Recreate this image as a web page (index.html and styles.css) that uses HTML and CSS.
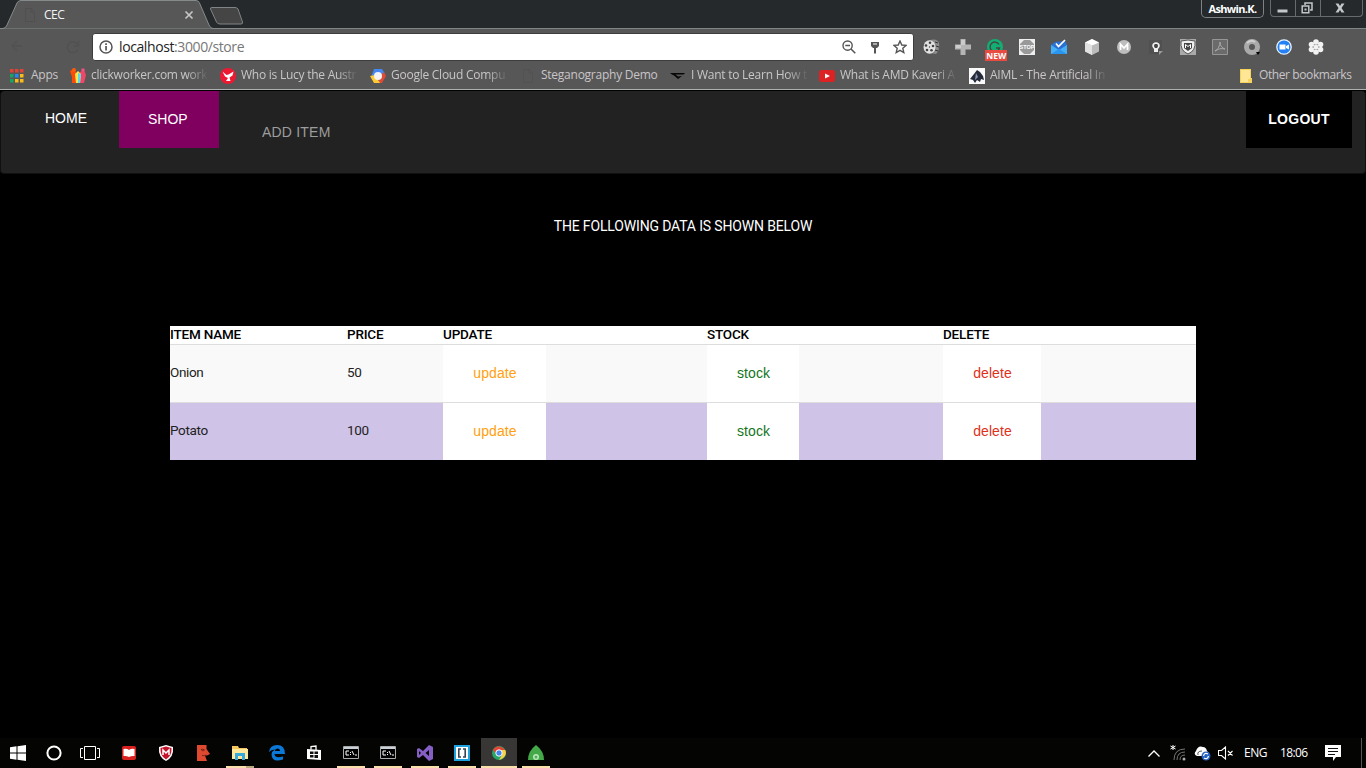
FILE: index.html
```html
<!DOCTYPE html>
<html lang="en">
<head>
<meta charset="utf-8">
<title>CEC</title>
<link rel="stylesheet" href="styles.css">
</head>
<body>
<header class="chrome">
  <div class="tabstrip">
    <div class="tab">
      <svg class="tab-shape" width="245" height="29" viewBox="0 0 245 29"><path d="M0 29V28.500H3Q6 28 7 25L17 3Q18 .5 21 .5H196Q198.500 .5 199.500 3L209 25Q210.500 28.500 213 28.500H245V29Z" fill="#575757" stroke="#858b8b"/><path d="M212 7.500H235Q237 7.500 238 9L242.500 22Q243 24 241 24H220Q217.500 24 216.500 22L210.500 9Q210 7.500 212 7.500Z" fill="#454545" stroke="#808484"/></svg>
      <svg class="tab-doc" width="12" height="14" viewBox="0 0 12 14"><path d="M1.500 .5h6l3 3v10h-9zM7 .5v3.500h3.500" fill="none" stroke="#505050"/></svg>
      <span class="tab-title">CEC</span>
      <svg class="tab-close" width="10" height="10" viewBox="0 0 10 10"><path d="M1.500 1.500l7 7M8.500 1.500l-7 7" stroke="#c6c6c6" stroke-width="1.700"/></svg>
    </div>
    <div class="user">Ashwin.K.</div>
    <div class="window-controls">
      <span><svg width="11" height="12" viewBox="0 0 11 12"><path d="M.5 7.500h10v3H.5z" fill="#c4c6c7"/></svg></span>
      <span><svg width="12" height="12" viewBox="0 0 12 12"><path d="M4 3V1h7v7H9M1.200 4h6.600v6.800H1.200z" fill="none" stroke="#c4c6c7" stroke-width="1.500"/><path d="M3.500 6.500h2v2h-2z" fill="#c4c6c7"/></svg></span>
      <span><svg width="10" height="10" viewBox="0 0 10 10"><path d="M.5.5h3L5 3 6.500.5h3L6.500 5l3 4.500h-3L5 7 3.500 9.500h-3l3-4.500z" fill="#c4c6c7"/></svg></span>
    </div>
  </div>

  <div class="toolbar">
    <div class="nav-icons">
      <svg width="12" height="12" viewBox="0 0 12 12"><path d="M11 6H1m5-5L1 6l5 5" fill="none" stroke="#525252" stroke-width="1.500"/></svg>
      <svg width="14" height="14" viewBox="0 0 14 14"><path d="M12 5A5.500 5.500 0 1 0 12 9.500M12.500 1v5h-5" fill="none" stroke="#525252" stroke-width="1.600"/></svg>
    </div>
    <div class="address">
      <svg width="14" height="14" viewBox="0 0 14 14"><circle cx="7" cy="7" r="6" fill="none" stroke="#555" stroke-width="1.500"/><path d="M6.200 6h1.700v4.500H6.200zM6.200 3.300h1.700V5H6.200z" fill="#555"/></svg>
      <span class="url">localhost<i>:3000/store</i></span>
      <svg class="lens" width="14" height="14" viewBox="0 0 14 14"><circle cx="5.600" cy="5.600" r="4.600" fill="none" stroke="#555" stroke-width="1.400"/><path d="M9 9l4.300 4.300M3.300 5.600H8" stroke="#555" stroke-width="1.500"/></svg>
      <svg class="key" width="10" height="13" viewBox="0 0 10 13"><path d="M1 1h8v4L7 7H6v5.500H4V7H3L1 5z" fill="#555"/><path d="M3 3h4" stroke="#fff"/></svg>
      <svg width="14" height="14" viewBox="0 0 14 14"><path d="M7 1l1.800 4 4.200.4-3.200 2.900 1 4.200L7 10.300l-3.800 2.200 1-4.200L1 5.400 5.200 5z" fill="none" stroke="#555" stroke-width="1.400"/></svg>
    </div>
    <div class="extensions">
      <span><svg width="18" height="18" viewBox="0 0 18 18"><path d="M8 2q7-2 9 3 1 7-3 11l-6-1z" fill="#8c8c8c"/><path d="M13 4l3 1M14 8l3 1M13 12l3 1" stroke="#333"/><ellipse cx="7.500" cy="9" rx="6" ry="6.800" fill="#e2e2e2"/><g fill="#444"><circle cx="8" cy="4.700" r="1.300"/><circle cx="4" cy="7.500" r="1.300"/><circle cx="5" cy="12" r="1.300"/><circle cx="9.500" cy="12.300" r="1.300"/><circle cx="11" cy="8" r="1.300"/><circle cx="7.500" cy="9" r=".7"/></g></svg></span>
      <span><svg width="16" height="16" viewBox="0 0 16 16"><path d="M5.500 0h5v5.500H16v5h-5.500V16h-5v-5.500H0v-5h5.500z" fill="#b5b5b5"/><path d="M6 1h4v5H6zM1 6h5v3H1z" fill="#ccc"/></svg></span>
      <span class="new-ext"><svg width="16" height="16" viewBox="0 0 16 16"><circle cx="8" cy="8" r="8" fill="#12ae72"/><path d="M12 5.500A4.800 4.800 0 1 0 12.500 9H9" fill="none" stroke="#454545" stroke-width="1.400"/></svg><b>NEW</b></span>
      <span><svg width="16" height="16" viewBox="0 0 16 16"><path d="M0 0h16v16H0z" fill="#eee"/><path d="M5 1h6l4 4v6l-4 4H5l-4-4V5z" fill="#999"/><text x="8" y="10.200" text-anchor="middle" class="stop">STOP</text></svg></span>
      <span><svg width="16" height="16" viewBox="0 0 16 16"><path d="M0 6l4-3 10-1 2 4v9H0z" fill="#2675d8"/><path d="M3 4l9-1 2 5-6 4-5-4z" fill="#2b6fd0"/><path d="M0 6l8 5 8-5v9H0z" fill="#45b0fa"/><path d="M0 15l8-5 8 5z" fill="#2b95ee"/><path d="M5 4.500l2.500 3L14 1" fill="none" stroke="#fff" stroke-width="1.700"/></svg></span>
      <span><svg width="16" height="16" viewBox="0 0 16 16"><path d="M8 0l7 3.500v9L8 16l-7-3.500v-9z" fill="#bbb"/><path d="M8 0l7 3.500-7 3-7-3z" fill="#fff"/><path d="M1 3.500l7 3V16l-7-3.500z" fill="#e1e1e1"/></svg></span>
      <span><svg width="16" height="16" viewBox="0 0 16 16"><circle cx="8" cy="8" r="7" fill="#bdbdbd"/><path d="M4.500 11V5.200L8 9l3.500-3.800V11" fill="none" stroke="#fff" stroke-width="1.800"/></svg></span>
      <span><svg width="16" height="16" viewBox="0 0 16 16"><path d="M1 1h13v14H1z" fill="#505050"/><path d="M6 10q-3-3-1-5.500 3-2.700 6 0 2 2.500-1 5.500v3H6z" fill="#eee"/><path d="M7 9Q5 6.500 7 5h2q2 1.500 0 4z" fill="#444"/><path d="M11 12h4l-4 4z" fill="#999"/></svg></span>
      <span><svg width="16" height="16" viewBox="0 0 16 16"><path d="M0 0h16v16H0z" fill="#aaa"/><path d="M1 2l7-1 7 1q1 10-7 13Q0 12 1 2z" fill="#eee" stroke="#555"/><path d="M4 4h8v5l-4 3-4-3z" fill="#444"/><path d="M5.500 9V5.500l2.500 2 2.500-2V9" fill="none" stroke="#fff"/></svg></span>
      <span><svg width="16" height="16" viewBox="0 0 16 16"><path d="M.5.5h15v15H.5z" fill="#6b6b6b" stroke="#969696"/><path d="M3 12c3-1 5-6 5-9 0 4 2 6 5 7-4-1-7 0-10 2z" fill="none" stroke="#aaa"/></svg></span>
      <span><svg width="16" height="16" viewBox="0 0 16 16"><circle cx="8" cy="8" r="5.500" fill="none" stroke="#aaa" stroke-width="5"/><path d="M3 4q4-4 8-1" fill="none" stroke="#d0d0d0" stroke-width="2"/><path d="M12 13h4l-2 3z" fill="#000"/></svg></span>
      <span><svg width="16" height="16" viewBox="0 0 16 16"><circle cx="8" cy="8" r="7.200" fill="#2381f5" stroke="#e8f2ff" stroke-width="1.300"/><path d="M3.500 5.500h6v5h-6zM10 7l3-1.500v5L10 9z" fill="#fff"/></svg></span>
      <span><svg width="16" height="16" viewBox="0 0 16 16"><g fill="#f2f2f2"><circle cx="8" cy="3" r="2.800"/><circle cx="3.500" cy="5.500" r="2.800"/><circle cx="12.500" cy="5.500" r="2.800"/><circle cx="3.500" cy="10.500" r="2.800"/><circle cx="12.500" cy="10.500" r="2.800"/><circle cx="8" cy="13" r="2.800"/><circle cx="8" cy="8" r="2.500"/></g><g fill="#aaa"><circle cx="6.500" cy="5.500" r=".8"/><circle cx="9.500" cy="5.500" r=".8"/><circle cx="5" cy="8" r=".8"/><circle cx="11" cy="8" r=".8"/><circle cx="6.500" cy="10.500" r=".8"/><circle cx="9.500" cy="10.500" r=".8"/></g></svg></span>
    </div>
  </div>

  <div class="bookmarks">
    <div class="mark apps"><svg width="14" height="14" viewBox="0 0 14 14"><path fill="#e34335" d="M0 0h3.500v3.500H0zM5 0h3.500v3.500H5zM10 0h3.500v3.500H10z"/><path fill="#16a562" d="M0 5h3.500v3.500H0zM0 10h3.500v3.500H0z"/><path fill="#2389f5" d="M5 5h3.500v3.500H5z"/><path fill="#fbbc17" d="M10 5h3.500v3.500H10zM5 10h3.500v3.500H5zM10 10h3.500v3.500H10z"/></svg><span>Apps</span></div>
    <div class="mark m1"><svg width="16" height="16" viewBox="0 0 16 16"><path d="M0 3l3-2 3 3v11H2V9z" fill="#fb4b09"/><circle cx="4" cy="2" r="2" fill="#ff5a0a"/><path d="M10 4l4-2 2 5-2 8h-4z" fill="#ef466b"/><circle cx="13" cy="2" r="1.800" fill="#f05080"/><path d="M5 6l3-3 3 3-1 9H6z" fill="#ffe44c"/><path d="M8 5l3 1-1 9H8z" fill="#54d9ed"/></svg><span class="fade">clickworker.com work</span></div>
    <div class="mark m2"><svg width="16" height="16" viewBox="0 0 16 16"><circle cx="8" cy="8" r="8" fill="#ed1932"/><path d="M2.500 3.500l4 3.500 2-.5 5-3-1 4-3 2 1 3.500H6l2-3-3-1.500z" fill="#fff"/></svg><span class="fade">Who is Lucy the Austr</span></div>
    <div class="mark m3"><svg width="16" height="16" viewBox="0 0 16 16"><path d="M4 1h8l2.500 4-5 2-8 1z" fill="#4688f1"/><path d="M14 4l2 4-4 7H8l3-8z" fill="#df4b37"/><path d="M0 8l4 7h6l-5-8z" fill="#ffcb35"/><circle cx="8" cy="8" r="4" fill="#f4f4f4"/></svg><span class="fade">Google Cloud Compu</span></div>
    <div class="mark m4"><svg width="16" height="14" viewBox="0 0 16 14"><path d="M3.500.5h6l3 3v10h-9zM9 .5V4h3.500" fill="none" stroke="#525252"/></svg><span>Steganography Demo</span></div>
    <div class="mark m5"><svg width="16" height="16" viewBox="0 0 16 16"><path d="M0 5h15l-1.500 1.500H5.500l2.500 2 4-.5-4 3-4-3.500-2-1z" fill="#070707"/></svg><span class="fade">I Want to Learn How t</span></div>
    <div class="mark m6"><svg width="16" height="12" viewBox="0 0 16 12"><rect width="16" height="12" rx="2.500" fill="#dc2222"/><path d="M6 3.500l5 2.500-5 2.500z" fill="#fff"/></svg><span class="fade">What is AMD Kaveri A</span></div>
    <div class="mark m7"><svg width="16" height="16" viewBox="0 0 16 16"><path d="M0 0h16v16H0z" fill="#fafafa"/><path d="M1 11l4-5 3-4 3 2 3 4 1 4-3-1-1 3-3-2-2 3-2-3z" fill="#252b3a"/><path d="M7 5l2 4-3 3z" fill="#9099ad"/></svg><span class="fade">AIML - The Artificial In</span></div>
    <div class="mark other"><svg width="12" height="14" viewBox="0 0 12 14"><path d="M0 0h11v9h1v5H0z" fill="#f5d35c"/><path d="M1 1h9v9H8v3H1z" fill="#ffe795"/></svg><span>Other bookmarks</span></div>
  </div>
</header>

<main class="page">
  <nav class="navbar">
    <a class="home">HOME</a><a class="shop">SHOP</a><a class="add">ADD ITEM</a><a class="logout">LOGOUT</a>
  </nav>
  <h1 class="heading">THE FOLLOWING DATA IS SHOWN BELOW</h1>
  <table class="items">
    <colgroup><col class="c-name"><col class="c-price"><col class="c-update"><col class="c-stock"><col class="c-delete"></colgroup>
    <thead><tr><th>ITEM NAME</th><th>PRICE</th><th>UPDATE</th><th>STOCK</th><th>DELETE</th></tr></thead>
    <tbody>
      <tr><td>Onion</td><td>50</td><td><a class="btn update">update</a></td><td><a class="btn stock">stock</a></td><td><a class="btn delete">delete</a></td></tr>
      <tr><td>Potato</td><td>100</td><td><a class="btn update">update</a></td><td><a class="btn stock">stock</a></td><td><a class="btn delete">delete</a></td></tr>
    </tbody>
  </table>
</main>

<footer class="taskbar">
  <div class="start">
    <span><svg width="16" height="16" viewBox="0 0 16 16"><path d="M0 2.200L6.500 1.300V7.500H0zM7.500 1.200L16 0v7.500H7.500zM0 8.500h6.500v6.200L0 13.800zM7.500 8.500H16V16l-8.500-1.200z" fill="#fff"/></svg></span>
    <span><svg width="16" height="16" viewBox="0 0 16 16"><circle cx="8" cy="8" r="6.600" fill="none" stroke="#fff" stroke-width="2"/></svg></span>
    <span><svg width="20" height="14" viewBox="0 0 20 14"><path d="M4.500.5h11v13h-11zM3 2.500H.5v9H3M17 2.500h2.500v9H17" fill="none" stroke="#fff"/></svg></span>
  </div>
  <div class="tasks">
    <span><svg width="14" height="14" viewBox="0 0 14 14"><rect width="14" height="14" rx="2" fill="#d92220"/><path d="M1.500 3q3-1 5.500 1 2.500-2 5.500-1v7q-3-.5-5.500 1-2.500-1.500-5.500-1z" fill="#fff"/></svg></span>
    <span><svg width="16" height="16" viewBox="0 0 16 16"><path d="M1 2l7-2 7 2q1 10-7 14Q0 12 1 2z" fill="#fff"/><path d="M2.500 3L8 1.500 13.500 3Q14 11 8 14.500 2 11 2.500 3z" fill="#c5152c"/><path d="M5 10V5l3 3 3-3v5" fill="none" stroke="#fff" stroke-width="1.500"/></svg></span>
    <span><svg width="14" height="16" viewBox="0 0 14 16"><path d="M1 0h9.500v4L14 9l-3 1.500H9L11 16H1z" fill="#df4930"/><path d="M5 4.500q2-1 3.500.5L7 6zM6 10.500q3 .5 4.500-.5" fill="none" stroke="#612018" stroke-width=".8"/></svg></span>
    <span class="run folder"><svg width="18" height="16" viewBox="0 0 18 16"><path d="M1 1h6l1 2h8v11H1z" fill="#f6c75d"/><path d="M1 4h16v10H1z" fill="#ffe79b"/><path d="M4 8h10v7h-3v-4H7v4H4z" fill="#36a9dd"/></svg></span>
    <span><svg width="16" height="16" viewBox="0 0 16 16"><path d="M0 7Q1 0 8 0q8 0 8 9H5.500Q6 14 14 11.500v3Q3 18 2.500 9.500 3 6 6 4.500 2 4.500 0 7zM5.800 6h5.200Q11 3.500 8.500 3.500T5.800 6z" fill="#0b78d7" fill-rule="evenodd"/></svg></span>
    <span><svg width="16" height="16" viewBox="0 0 16 16"><path d="M1 4l14 1v10L1 14z" fill="#fff"/><path d="M5 4.500V1.500L10 1v4" fill="none" stroke="#fff" stroke-width="1.300"/><path d="M4 6.500h3.500V9H4zM8.500 6.500H12V9H8.500zM4 10h3.500v2.500H4zM8.500 10H12v3H8.500z" fill="#111"/></svg></span>
    <span class="run"><svg width="16" height="14" viewBox="0 0 16 14"><path d="M.5.5h15v12H.5z" fill="#000" stroke="#aaa"/><path d="M1 2h14" stroke="#c9d1d8" stroke-width="2"/><path d="M6 5H3v4h3M7.500 6v1M7.500 8v1M9 5l2 4M12 9h2" fill="none" stroke="#fff"/></svg></span>
    <span class="run"><svg width="16" height="14" viewBox="0 0 16 14"><path d="M.5.5h15v12H.5z" fill="#000" stroke="#aaa"/><path d="M1 2h14" stroke="#c9d1d8" stroke-width="2"/><path d="M6 5H3v4h3M7.500 6v1M7.500 8v1M9 5l2 4M12 9h2" fill="none" stroke="#fff"/></svg></span>
    <span class="run"><svg width="16" height="16" viewBox="0 0 16 16"><path d="M12 0l4 2v12l-4 2-6-6-4 3-2-1V4l2-1 4 3zM12 5L8.500 8l3.500 3zM2 6v4l2-2z" fill="#865fc5" fill-rule="evenodd"/></svg></span>
    <span class="run"><svg width="16" height="16" viewBox="0 0 16 16"><path d="M0 0h16v16H0z" fill="#1ca3df"/><path d="M2 2h12v12H2z" fill="#fff"/><path d="M7 4H4.800v8H7M9 4h2.200v8H9" fill="none" stroke="#344554" stroke-width="1.600"/></svg></span>
    <span class="run active"><svg width="14" height="14" viewBox="0 0 14 14"><circle cx="7" cy="7" r="7" fill="#27a768"/><path d="M1 3.500Q7-3 13.200 4H7L4 8z" fill="#e24435"/><path d="M7 4h6.300Q16 11 7 14l3-5z" fill="#fbd247"/><circle cx="7" cy="7" r="3.200" fill="#4385ed" stroke="#fff" stroke-width="1"/></svg></span>
    <span class="run"><svg width="16" height="16" viewBox="0 0 16 16"><path d="M8 0q8 6 8 15H0Q0 6 8 0z" fill="#44a948"/><circle cx="8" cy="12" r="3" fill="#b9e9b8"/><circle cx="8" cy="12" r="1.500" fill="#5aac5c"/></svg></span>
  </div>
  <div class="tray">
    <svg class="chev" width="12" height="7" viewBox="0 0 12 7"><path d="M.5 6.500L6 1l5.500 5.500" fill="none" stroke="#fff" stroke-width="1.300"/></svg>
    <svg class="wifi" width="16" height="16" viewBox="0 0 16 16"><g fill="none" stroke="#767676"><path d="M4 15Q4 4 15 4M7 15q0-8 8-8M10 15q0-5 5-5"/></g><circle cx="14" cy="14" r="1.500" fill="#aaa"/><path d="M3 0v5M.5 1l5 3M5.500 1l-5 3" stroke="#fff"/></svg>
    <svg class="cloud" width="17" height="16" viewBox="0 0 17 16"><path d="M3 11q-4-2-1-5Q4 0 9 2q3 0 4 4 3 2 2 5z" fill="#fff"/><path d="M4 10q-1-4 4-4" fill="none" stroke="#111" stroke-width=".7"/><circle cx="12" cy="11" r="4.500" fill="#2463c4"/><path d="M9.500 11q1-4 4.500-2M14.500 11q-1 4-4.500 2" fill="none" stroke="#fff" stroke-width="1.200"/></svg>
    <svg class="vol" width="16" height="14" viewBox="0 0 16 14"><path d="M.5 4.500h3l4-3.500v12l-4-3.500h-3zM10 5l4.500 4.500M14.500 5L10 9.500" fill="none" stroke="#fff" stroke-width="1.100"/></svg>
    <span class="lang">ENG</span><span class="clock">18:06</span>
    <svg class="note" width="16" height="16" viewBox="0 0 16 16"><path d="M0 0h16v12h-5l-3 4v-4H0z" fill="#fff"/><path d="M3 3.500h10M3 6.500h10M3 9.500h7" stroke="#111"/></svg>
  </div>
</footer>
</body>
</html>
```

FILE: styles.css
```css
* { box-sizing: border-box; }
body { margin: 0; width: 1366px; height: 768px; overflow: hidden; background: #000; display: flex; flex-direction: column; font-family: "Liberation Sans", Arial, sans-serif; }
svg { display: block; flex: none; }

.chrome { height: 90px; background: #575757; border-bottom: 1px solid #aeb1b1; font-family: "Open Sans", "Noto Sans", sans-serif; flex: none; }
.tabstrip { height: 29px; background: #25292c; border-bottom: 1px solid #7d8585; display: flex; }
.tab { position: relative; width: 245px; height: 29px; display: flex; padding-left: 24px; }
.tab-shape { position: absolute; left: 0; top: 0; }
.tab-doc { position: relative; margin-top: 8px; }
.tab-title { position: relative; margin-left: 8px; width: 140px; font-size: 12px; line-height: 29px; letter-spacing: -.5px; color: #f4f4f4; }
.tab-close { position: relative; margin-top: 10px; }
.user { margin-left: auto; width: 63px; height: 18px; border: 1px solid #7e8284; border-top: 0; border-radius: 0 0 5px 5px; color: #fff; font-size: 11px; font-weight: 700; line-height: 17px; letter-spacing: -.65px; text-align: center; }
.window-controls { display: flex; margin: 0 3px 0 6px; width: 93px; height: 17px; border: 1px solid #666b6e; border-top: 0; border-radius: 0 0 4px 4px; }
.window-controls span { width: 25px; padding-right: 2px; display: flex; align-items: center; justify-content: center; border-right: 1px solid #666b6e; }
.window-controls span:last-child { flex: 1; border: 0; padding-right: 4px; }

.toolbar { height: 36px; display: flex; align-items: center; }
.nav-icons { width: 92px; display: flex; padding-left: 11px; gap: 43px; }
.address { width: 822px; height: 28px; background: #fff; border: 1px solid #3d3d3d; border-radius: 3px; display: flex; align-items: center; padding-left: 6px; }
.url { margin-left: 6px; width: 723px; font-size: 14px; line-height: 24px; letter-spacing: -.4px; color: #222; }
.url i { font-style: normal; color: #777; }
.key { margin: 0 13px 0 14px; }
.extensions { display: flex; margin-left: 1px; }
.extensions span { width: 32.100px; height: 28px; display: flex; align-items: center; justify-content: center; }
.new-ext { position: relative; }
.new-ext b { position: absolute; left: 6px; top: 17px; width: 22px; height: 11px; background: #ea4b40; color: #fff; font-size: 8.500px; line-height: 11px; text-align: center; }
.stop { font: bold 5.500px "Liberation Sans", sans-serif; fill: #fff; }

.bookmarks { height: 21px; display: flex; align-items: center; padding-left: 10px; font-size: 12px; letter-spacing: -.25px; color: #c9c5c8; line-height: 20px; white-space: nowrap; }
.mark { display: flex; align-items: center; gap: 5px; width: 150px; flex: none; }
.mark span { width: 120px; padding-bottom: 1px; }
.fade { mask-image: linear-gradient(90deg, #000 80%, transparent 98%); }
.apps { width: 60px; gap: 7px; }
.apps span { width: 30px; }
.m5 { width: 149px; }
.other { margin-left: 121px; width: 116px; gap: 7px; }
.other span { width: 97px; letter-spacing: -.4px; }

.page { flex: 1; min-height: 0; background: #000; }
.navbar { height: 83px; margin: 1px 0 0; background: #222; border: 1px solid #101010; border-top: 0; border-radius: 4px; display: flex; align-items: flex-start; font-size: 14px; line-height: 20px; color: #fff; }
.home { width: 118px; padding: 17px 0 0 44px; }
.shop { width: 100px; height: 57px; background: #80005f; padding: 18px 0 0 29px; }
.add { margin-left: 43px; padding-top: 31px; color: #9d9d9d; letter-spacing: .2px; }
.logout { margin: 0 13px 0 auto; width: 106px; height: 57px; background: #000; padding-top: 18px; text-align: center; font-weight: 700; letter-spacing: .3px; }
.heading { margin: 42px 0 90px; text-align: center; font-family: Roboto, sans-serif; font-size: 14px; line-height: 20px; font-weight: 400; color: #fff; letter-spacing: -.15px; }
.items { width: 1026px; margin: 0 auto; table-layout: fixed; border-collapse: separate; border-spacing: 0; font-family: Roboto, sans-serif; font-size: 13.500px; letter-spacing: -.35px; color: #222; background: #fff; }
.c-name { width: 177px; }
.c-price { width: 96px; }
.c-update { width: 264px; }
.c-stock { width: 236px; }
.c-delete { width: 253px; }
.items th { padding: 0 0 2px; height: 19px; line-height: 16px; font-weight: 500; letter-spacing: -.2px; text-align: left; color: #000; border-bottom: 1px solid #ddd; }
.items td { padding: 0 0 3px; height: 57px; }
.items td:nth-child(n+3) { padding: 0; }
.items tbody tr:first-child td { height: 58px; background: #f9f9f9; border-bottom: 1px solid #ddd; }
.items tbody tr:last-child td { background: #d0c3e8; }
.btn { display: block; height: 57px; line-height: 57px; background: #fff; font-family: "Liberation Sans", Arial, sans-serif; font-size: 14px; text-align: center; letter-spacing: .1px; padding-left: 1px; }
.update { width: 103px; color: #ffa010; }
.stock { width: 92px; color: #137522; }
.delete { width: 98px; color: #df3018; }

.taskbar { height: 30px; flex: none; background: #040403; display: flex; color: #fff; font-family: "Open Sans", sans-serif; font-size: 12px; }
.start, .tasks { display: flex; }
.start span { width: 36px; display: flex; align-items: center; justify-content: center; }
.tasks { margin-left: 3px; }
.tasks span { width: 36px; margin-right: 1px; display: flex; align-items: center; justify-content: center; position: relative; }
.run::after { content: ""; position: absolute; left: 4px; right: 4px; bottom: 0; height: 2px; background: #f9dfaa; }
.active { background: #383735; }
.active::after { left: 0; right: 0; }
.folder::after { background: linear-gradient(90deg, #f9dfaa 70%, #b9a77e 70%); }
.tray { margin-left: auto; display: flex; align-items: center; width: 218px; }
.wifi { margin-left: 10px; }
.cloud { margin-left: 8px; }
.vol { margin-left: 7px; }
.lang { margin-left: 10px; width: 36px; padding-bottom: 1px; letter-spacing: -.45px; }
.clock { width: 45px; padding-bottom: 1px; letter-spacing: -.65px; }
.tray::after { content: ""; margin-left: 20px; width: 1px; height: 30px; background: #555; }
```
